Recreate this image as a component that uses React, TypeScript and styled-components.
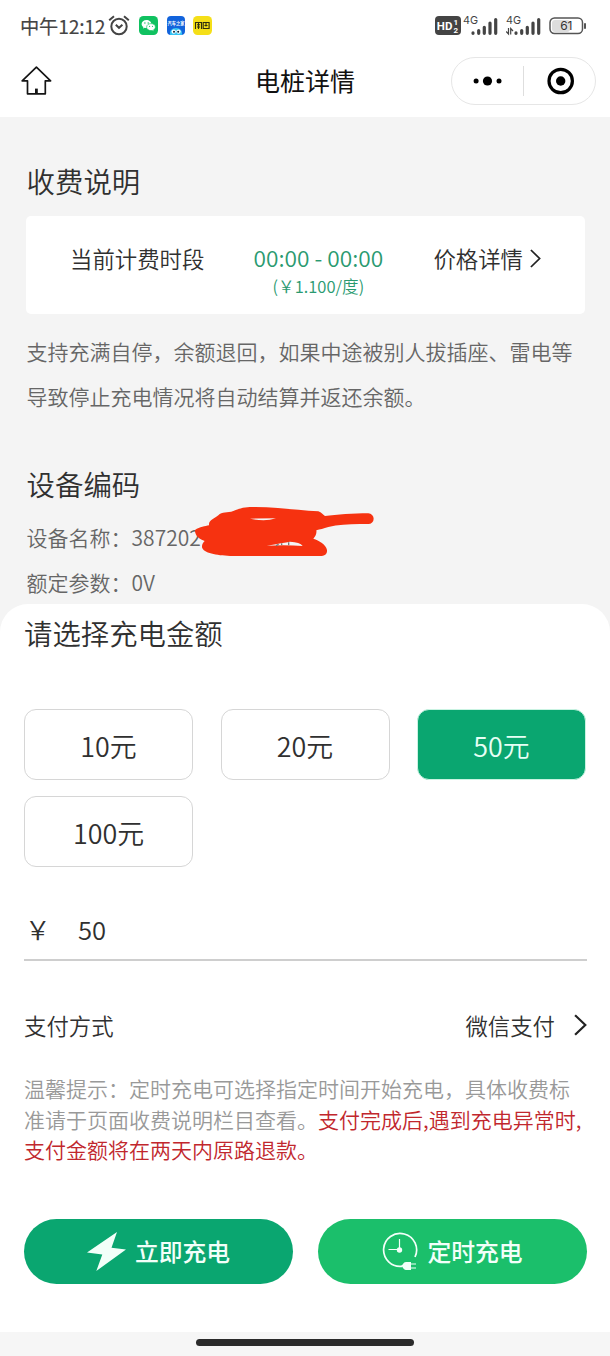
import React, { useState } from "react";
import styled, { createGlobalStyle, css } from "styled-components";

const GlobalStyle = createGlobalStyle`
  * { box-sizing: border-box; }
  body {
    margin: 0;
    background: #f4f4f4;
    font-family: "Noto Sans CJK SC", "Noto Sans", sans-serif;
    font-weight: 350;
    color: #303030;
  }
  button { font-family: inherit; font-weight: inherit; padding: 0; cursor: pointer; }
  svg { display: block; flex: none; }
`;

const Page = styled.div`
  width: 610px;
  height: 1356px;
  display: flex;
  flex-direction: column;
  overflow: hidden;
  background: #f4f4f4;
`;

const Header = styled.header`
  height: 117px;
  flex: none;
  background: #fff;
`;

const StatusBar = styled.div`
  height: 52px;
  padding: 0 23px 1px 20px;
  display: flex;
  align-items: center;
  justify-content: space-between;
`;

const StatusGroup = styled.div<{ $gap: number }>`
  display: flex;
  align-items: center;
  gap: ${(p) => p.$gap}px;
`;

const Clock = styled.span`
  font-size: 19.3px;
  line-height: 28px;
  font-weight: 400;
  -webkit-text-stroke: 0.15px #444;
  letter-spacing: -0.2px;
  color: #444;
  width: 80px;
  white-space: nowrap;
`;

const NavBar = styled.div`
  height: 57px;
  padding: 0 14px 0 21px;
  display: grid;
  grid-template-columns: 138px 1fr 145px;
  align-items: center;
`;

const NavTitle = styled.h1`
  margin: 0;
  padding-bottom: 2px;
  font-size: 25px;
  line-height: 36px;
  font-weight: 400;
  text-align: center;
  color: #111;
`;

const Capsule = styled.div`
  width: 145px;
  height: 48px;
  border: 1px solid #e6e6e6;
  border-radius: 24px;
  display: grid;
  grid-template-columns: 1fr 1px 1fr;
  align-items: center;
  justify-items: center;
`;

const CapsuleDivider = styled.span`
  width: 1px;
  height: 30px;
  background: #dedede;
`;

const Info = styled.section`
  height: 487px;
  flex: none;
  padding: 44px 25px 0 26px;
`;

const SectionTitle = styled.h2`
  margin: 0;
  font-size: 28.4px;
  line-height: 40px;
  font-weight: 350;
  color: #303030;
`;

const InfoTitle = styled(SectionTitle)`
  padding-left: 0.6px;
`;

const PriceCard = styled.div`
  margin-top: 15px;
  height: 98px;
  padding: 26px 44px 0 44px;
  display: flex;
  justify-content: space-between;
  background: #fff;
  border-radius: 5px;
  font-size: 22.4px;
  line-height: 32px;
`;

const Period = styled.div`
  text-align: center;
  color: #2a9a70;
  margin-left: 4px;
  margin-right: 5px;
`;

const PeriodTime = styled.div`
  font-size: 22.7px;
  line-height: 32px;
`;

const PeriodPrice = styled.div`
  font-size: 16.6px;
  line-height: 24px;
`;

const DetailLink = styled.div`
  display: flex;
  align-items: center;
  height: 32px;
  gap: 7px;
`;

const Paragraph = styled.p`
  margin: 15px 0 0;
  padding-left: 0.6px;
  font-size: 21px;
  line-height: 45px;
  color: #666;
  white-space: nowrap;
`;

const DeviceTitle = styled(InfoTitle)`
  margin-top: 45px;
`;

const DeviceRows = styled.div`
  margin-top: 11px;
`;

const DeviceRow = styled.div`
  position: relative;
  padding-left: 0.6px;
  font-size: 21px;
  line-height: 45px;
  color: #666;
`;

const ScribbleMark = styled.svg`
  position: absolute;
  left: 164px;
  top: -15px;
`;

const Sheet = styled.main`
  height: 728px;
  flex: none;
  padding: 9px 23px 0 24px;
  background: #fff;
  border-radius: 28px 28px 0 0;
`;

const AmountGrid = styled.div`
  margin-top: 56px;
  display: grid;
  grid-template-columns: repeat(3, 169px);
  grid-auto-rows: 71px;
  column-gap: 27.5px;
  row-gap: 16px;
`;

const AmountButton = styled.button<{ $active: boolean }>`
  border: 1px solid #d6d6d6;
  border-radius: 12px;
  background: #fff;
  font-size: 26.9px;
  line-height: 40px;
  padding-top: 2px;
  color: #303030;
  ${(p) =>
    p.$active &&
    css`
      border-color: #c9f3e2;
      background: #0aa670;
      color: #e6fff5;
    `}
`;

const AmountInput = styled.div`
  margin-top: 32px;
  height: 62px;
  padding: 11px 0 0 1px;
  display: flex;
  border-bottom: 2px solid #cecece;
  font-size: 25.6px;
  line-height: 38px;
`;

const Currency = styled.span`
  width: 53px;
`;

const PayRow = styled.div`
  margin-top: 47px;
  height: 34px;
  display: flex;
  align-items: center;
  justify-content: space-between;
  font-size: 22.4px;
  line-height: 34px;
`;

const PayMethod = styled.div`
  display: flex;
  align-items: center;
  gap: 19px;
`;

const Hint = styled.p`
  margin: 31px 0 0;
  font-size: 21px;
  line-height: 30.6px;
  color: #999;
  white-space: nowrap;
`;

const Warning = styled.span`
  color: #c1272d;
`;

const Actions = styled.div`
  margin-top: 54px;
  display: flex;
  justify-content: space-between;
`;

const ActionButton = styled.button<{ $color: string }>`
  width: 269px;
  height: 65px;
  border: 0;
  border-radius: 33px;
  display: flex;
  align-items: center;
  justify-content: center;
  gap: 9px;
  background: ${(p) => p.$color};
  color: #f2fff9;
  font-size: 23.8px;
  line-height: 36px;
  font-weight: 500;
`;

const HomeIndicator = styled.footer`
  height: 24px;
  flex: none;
  padding-top: 7px;
  background: #f6f6f6;
`;

const HomeBar = styled.div`
  width: 218px;
  height: 7px;
  margin-left: 196px;
  border-radius: 4px;
  background: #2b2b2b;
`;

const AlarmIcon = () => (
  <svg width="22" height="22" viewBox="0 0 22 22" fill="none" stroke="#444" strokeWidth="2">
    <circle cx="11" cy="11.5" r="7.7" />
    <path d="M1.2 5.2 6 1.2M20.8 5.2 16 1.2" />
    <path d="m7.8 9.8 3.2 3 3.4-3" />
  </svg>
);

const WeChatIcon = () => (
  <svg width="19" height="19" viewBox="0 0 19 19">
    <rect width="19" height="19" rx="4.5" fill="#10c160" />
    <path d="M7.5 4C4.7 4 2.6 5.8 2.6 8c0 1.3.7 2.4 1.8 3.100L4 12.600l1.800-.9c.5.1 1.100.2 1.700.2C10.200 11.900 12.400 10.200 12.400 8S10.200 4 7.500 4Z" fill="#fff" />
    <path d="M12 7.600c-2.500 0-4.400 1.500-4.400 3.500s1.900 3.500 4.400 3.500c.5 0 1-.1 1.500-.2l1.500.8-.4-1.400c1.100-.6 1.800-1.600 1.800-2.700 0-2-1.900-3.500-4.400-3.500Z" fill="#fff" stroke="#10c160" strokeWidth=".6" />
    <g fill="#10c160">
      <circle cx="5.9" cy="7" r=".7" />
      <circle cx="9.2" cy="7" r=".7" />
      <circle cx="10.6" cy="10.3" r=".6" />
      <circle cx="13.5" cy="10.3" r=".6" />
    </g>
  </svg>
);

const AutoHomeIcon = () => (
  <svg width="18" height="19" viewBox="0 0 18 19">
    <rect width="18" height="19" rx="4" fill="#1263dc" />
    <text x="9" y="9.3" fontSize="4.2" fontWeight="700" textAnchor="middle" fill="#fff">汽车之家</text>
    <path d="M3.200 19c-1-4 1.500-7 5.800-7s6.800 3 5.800 7Z" fill="#35c3f3" />
    <circle cx="6.7" cy="15.6" r="2.2" fill="#fff" />
    <circle cx="11.5" cy="15.6" r="2.2" fill="#fff" />
    <circle cx="7" cy="15.7" r="1" fill="#123" />
    <circle cx="11.2" cy="15.7" r="1" fill="#123" />
  </svg>
);

const YellowAppIcon = () => (
  <svg width="19" height="19" viewBox="0 0 19 19">
    <rect width="19" height="19" rx="4.5" fill="#f5df18" />
    <g fill="none" stroke="#30300f" strokeWidth="1.1">
      <path d="M2.500 13V6.500h6V13M4 8.800h3M4 11h3M5.500 6.500V13" />
      <path d="M10.200 6.500h5.900v6h-5.900zM11.500 9.500h3M13 6.500v4M9.800 12.500h6.800" />
    </g>
  </svg>
);

const HdIcon = () => (
  <svg width="26" height="19" viewBox="0 0 26 19">
    <rect width="26" height="19" rx="4" fill="#444" />
    <text x="1.8" y="14" fontSize="11.5" fontWeight="700" fill="#fff" fontFamily="Roboto, sans-serif">HD</text>
    <text x="18.6" y="9" fontSize="8" fontWeight="700" fill="#fff" fontFamily="Roboto, sans-serif">1</text>
    <text x="18.6" y="16.5" fontSize="8" fontWeight="700" fill="#fff" fontFamily="Roboto, sans-serif">2</text>
  </svg>
);

const SignalIcon = ({ data }: { data?: boolean }) => (
  <svg width="36" height="21" viewBox="0 0 36 21">
    <text x="0" y="8.5" fontSize="10.8" fontWeight="400" fill="#444" fontFamily="Inter, sans-serif">4G</text>
    <g stroke="#444" strokeWidth="3.2" strokeLinecap="round">
      <path d="M10 18.300v-.4M15.700 18.300v-2.800M21.300 18.300v-6M27 18.300V8M32.700 18.300V4.500" />
    </g>
    {data && <path d="M2.500 13v6l-2.300-2.500M4.700 19.500v-6l2.300 2.500" fill="none" stroke="#444" strokeWidth="1.2" />}
  </svg>
);

const BatteryIcon = () => (
  <svg width="38" height="18" viewBox="0 0 38 18">
    <rect x="3" y="3" width="18" height="12" rx="3" fill="#ddd" />
    <rect x="1" y="1" width="32.5" height="15.5" rx="4.5" fill="none" stroke="#555" strokeWidth="1.5" />
    <path d="M36 7v4" stroke="#555" strokeWidth="2" strokeLinecap="round" />
    <text x="17.3" y="13.2" fontSize="12" fontWeight="400" textAnchor="middle" fill="#333" fontFamily="Inter, sans-serif">61</text>
  </svg>
);

const HomeIcon = () => (
  <svg width="31" height="30" viewBox="0 0 31 30" fill="none" stroke="#151515" strokeWidth="1.7" strokeLinejoin="round">
    <path d="M15.400 1.200 1.200 14.800h5.300v13h17.800v-13h5.300L15.400 1.200Z" />
    <path d="M15.400 27.600v-5" strokeWidth="2.8" />
  </svg>
);

const MoreDots = () => (
  <svg width="30" height="12" viewBox="0 0 30 12">
    <circle cx="3.1" cy="6" r="2.5" />
    <circle cx="14.5" cy="6" r="4.6" />
    <circle cx="26" cy="6" r="2.5" />
  </svg>
);

const CloseTarget = () => (
  <svg width="28" height="28" viewBox="0 0 28 28">
    <circle cx="14.7" cy="14" r="11.7" fill="none" stroke="#000" strokeWidth="3.2" />
    <circle cx="14.7" cy="14" r="4.7" />
  </svg>
);

const Chevron = ({ width, height, weight }: { width: number; height: number; weight: number }) => (
  <svg width={width} height={height} viewBox="0 0 12 22" preserveAspectRatio="none" fill="none" stroke="#222" strokeWidth={weight}>
    <path d="m1 1.200 9.500 9.800L1 20.800" />
  </svg>
);

const BoltIcon = () => (
  <svg width="39" height="39" viewBox="0 0 39 39">
    <path d="M30 0 0 20.500l15.300 2L9.300 39 39 17.500l-14.500-1.800Z" fill="#f2fff9" />
  </svg>
);

const TimerPlugIcon = () => (
  <svg width="36" height="38" viewBox="0 0 36 38" fill="none" stroke="#f2fff9" strokeWidth="1.7">
    <path d="M20 34.300A16.500 16.500 0 1 1 33 25" />
    <path d="M17.500 7v10.500H6.500" strokeWidth="1.2" />
    <circle cx="17.500" cy="18" r="2.7" fill="#f2fff9" stroke="none" />
    <path d="M19 33.700c2 0 2-3.700 5-3.700h5v8h-5c-3 0-3-3.700-5-3.700Z" fill="#f2fff9" stroke="none" />
    <path d="M29 32h5M29 36h5" strokeWidth="1.2" />
  </svg>
);

const Scribble = () => (
  <ScribbleMark width="190" height="60" viewBox="570 150 570 180">
    <path
      fill="#f63210"
      fillRule="evenodd"
      d="M585 240C600 230 615 229 627 226C625 210 645 205 655 196C666 183 682 190 700 183C725 172 740 171 765 171C830 171 895 181 955 184C965 187 968 194 975 198C1010 194 1060 190 1105 190A16 16 0 0 1 1105 222C1060 221 1020 222 985 231C970 236 960 238 949 241C951 252 945 260 940 266C957 272 978 283 981 300C982 312 975 318 960 318H690C650 316 610 310 606 292C605 282 610 278 614 273C600 268 584 258 585 240ZM750 206Q795 216 828 205ZM800 287Q860 284 908 288Q900 276 870 275Q850 278 800 287Z"
    />
    <path d="m828 287 8-4M845 286v-6M866 286v-9" stroke="#777" strokeWidth="4" />
  </ScribbleMark>
);

const Cellular = styled.div`
  display: flex;
  gap: 7px;
  margin-right: 5px;
`;

const AMOUNTS = [10, 20, 50, 100];

export default function App() {
  const [amount, setAmount] = useState(50);

  return (
    <Page>
      <GlobalStyle />
      <Header>
        <StatusBar>
          <StatusGroup $gap={8.7}>
            <StatusGroup $gap={8.2}>
              <Clock>中午12:12</Clock>
              <AlarmIcon />
            </StatusGroup>
            <WeChatIcon />
            <AutoHomeIcon />
            <YellowAppIcon />
          </StatusGroup>
          <StatusGroup $gap={2}>
            <HdIcon />
            <Cellular>
              <SignalIcon />
              <SignalIcon data />
            </Cellular>
            <BatteryIcon />
          </StatusGroup>
        </StatusBar>
        <NavBar>
          <HomeIcon />
          <NavTitle>电桩详情</NavTitle>
          <Capsule>
            <MoreDots />
            <CapsuleDivider />
            <CloseTarget />
          </Capsule>
        </NavBar>
      </Header>

      <Info>
        <InfoTitle>收费说明</InfoTitle>
        <PriceCard>
          <span>当前计费时段</span>
          <Period>
            <PeriodTime>00:00 - 00:00</PeriodTime>
            <PeriodPrice>(￥1.100/度)</PeriodPrice>
          </Period>
          <DetailLink>
            价格详情
            <Chevron width={11} height={19} weight={1.9} />
          </DetailLink>
        </PriceCard>
        <Paragraph>
          支持充满自停，余额退回，如果中途被别人拔插座、雷电等
          <br />
          导致停止充电情况将自动结算并返还余额。
        </Paragraph>
        <DeviceTitle>设备编码</DeviceTitle>
        <DeviceRows>
          <DeviceRow>
            设备名称：387202
            <Scribble />
          </DeviceRow>
          <DeviceRow>额定参数：0V</DeviceRow>
        </DeviceRows>
      </Info>

      <Sheet>
        <SectionTitle>请选择充电金额</SectionTitle>
        <AmountGrid>
          {AMOUNTS.map((value) => (
            <AmountButton key={value} $active={value === amount} onClick={() => setAmount(value)}>
              {value}元
            </AmountButton>
          ))}
        </AmountGrid>
        <AmountInput>
          <Currency>￥</Currency>
          <span>{amount}</span>
        </AmountInput>
        <PayRow>
          <span>支付方式</span>
          <PayMethod>
            微信支付
            <Chevron width={13} height={22} weight={2} />
          </PayMethod>
        </PayRow>
        <Hint>
          温馨提示：定时充电可选择指定时间开始充电，具体收费标
          <br />
          准请于页面收费说明栏目查看。
          <Warning>
            支付完成后,遇到充电异常时,
            <br />
            支付金额将在两天内原路退款。
          </Warning>
        </Hint>
        <Actions>
          <ActionButton $color="#0aa670">
            <BoltIcon />
            立即充电
          </ActionButton>
          <ActionButton $color="#1bbf6b">
            <TimerPlugIcon />
            定时充电
          </ActionButton>
        </Actions>
      </Sheet>
      <HomeIndicator>
        <HomeBar />
      </HomeIndicator>
    </Page>
  );
}
